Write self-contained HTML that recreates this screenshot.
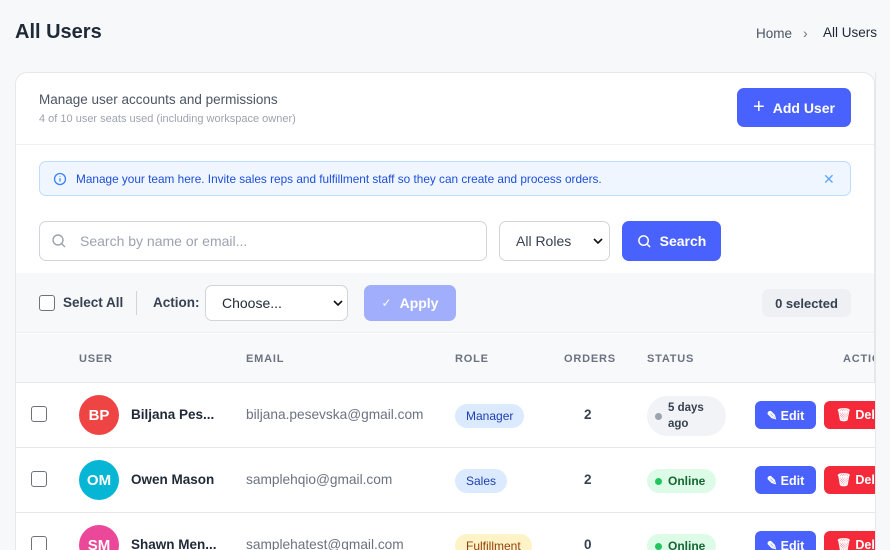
<!DOCTYPE html>
<html style="overflow:hidden;width:890px;height:550px"><head><meta charset="utf-8"><style>
*{box-sizing:border-box;margin:0;padding:0}
body{width:890px;height:550px;overflow:hidden;background:#f7f8fa;font-family:"Liberation Sans",sans-serif;position:relative;color:#1f2937}
.a{position:absolute}
.card{left:15px;top:72px;width:860px;height:478px;background:#fff;border:1px solid #e5e7eb;border-bottom:none;border-radius:12px 12px 0 0;overflow:hidden}
.btn{position:absolute;background:#4a62fd;color:#fff;border-radius:7px;font-weight:bold;display:flex;align-items:center;justify-content:center;gap:8px}
.cb{position:absolute;width:16px;height:16px;border:1.5px solid #6b7280;border-radius:3px;background:#fff}
.th{position:absolute;top:353px;font-size:11px;font-weight:bold;color:#6b7280;letter-spacing:.8px}
.row{position:absolute;left:16px;width:859px;height:65px;border-top:1px solid #e5e7eb;background:#fff;overflow:hidden}
.in{position:absolute;left:-16px;top:0;width:890px;height:65px}
.av{position:absolute;left:79px;top:12px;width:40px;height:40px;border-radius:50%;color:#fff;font-weight:bold;font-size:15px;display:flex;align-items:center;justify-content:center}
.nm{position:absolute;left:131px;top:24px;font-size:13.5px;font-weight:bold;color:#1f2937}
.em{position:absolute;left:246px;top:24px;font-size:13.7px;color:#6b7280}
.pill{position:absolute;left:455px;top:21px;height:24px;border-radius:12px;font-size:12px;padding:0 11px;display:flex;align-items:center}
.ord{position:absolute;left:584px;top:24px;font-size:13.5px;font-weight:bold;color:#374151}
.st{position:absolute;left:647px;top:21px;height:24px;border-radius:12px;font-size:12px;padding:0 11px 0 8px;display:flex;align-items:center;gap:6px;background:#dcfce7;color:#166534;font-weight:bold}
.dot{width:7px;height:7px;border-radius:50%;background:#22c55e}
.eb{position:absolute;left:755px;top:18px;width:61px;height:28px;background:#4a62fd;color:#fff;border-radius:6px;font-size:12.5px;font-weight:bold;display:flex;align-items:center;justify-content:center;gap:4px}
.db{position:absolute;left:824px;top:18px;width:80px;height:28px;background:#f42a3a;color:#fff;border-radius:6px;font-size:12.5px;font-weight:bold;display:flex;align-items:center;padding-left:12px;gap:5px}
</style></head><body>
<div class="a" style="left:15px;top:21px;font-size:20px;font-weight:bold;color:#1f2937">All Users</div>
<div class="a" style="left:756px;top:26px;font-size:13.5px;color:#4b5563">Home</div>
<div class="a" style="left:803px;top:25px;font-size:14px;color:#6b7280">›</div>
<div class="a" style="left:823px;top:25px;font-size:13.5px;color:#1f2937">All Users</div>

<div class="a card"></div>
<div class="a" style="left:39px;top:92px;font-size:13.5px;color:#4b5563">Manage user accounts and permissions</div>
<div class="a" style="left:39px;top:113px;font-size:11px;color:#9ca3af">4 of 10 user seats used (including workspace owner)</div>
<div class="btn" style="left:737px;top:88px;width:114px;height:39px;font-size:14px"><span style="font-size:20px;font-weight:normal">+</span>Add User</div>
<div class="a" style="left:16px;top:144px;width:858px;height:1px;background:#eef0f3"></div>

<div class="a" style="left:39px;top:161px;width:812px;height:35px;background:#eff6ff;border:1px solid #bfdbfe;border-radius:7px"></div>
<svg class="a" style="left:53px;top:172px" width="14" height="14" viewBox="0 0 14 14"><circle cx="7" cy="7" r="5.5" fill="none" stroke="#3b82f6" stroke-width="1.3"/><path d="M7 6.3v3.2M7 4.3v.4" stroke="#3b82f6" stroke-width="1.3"/></svg>
<div class="a" style="left:76px;top:172px;font-size:11.8px;color:#1d4ed8">Manage your team here. Invite sales reps and fulfillment staff so they can create and process orders.</div>
<div class="a" style="left:823px;top:171px;font-size:14px;color:#60a5fa">✕</div>

<div class="a" style="left:39px;top:221px;width:448px;height:40px;border:1px solid #d1d5db;border-radius:7px;background:#fff"></div>
<svg class="a" style="left:51px;top:233px" width="16" height="16" viewBox="0 0 16 16"><circle cx="7" cy="7" r="5" fill="none" stroke="#9ca3af" stroke-width="1.4"/><path d="M10.7 10.7l3.3 3.3" stroke="#9ca3af" stroke-width="1.4"/></svg>
<div class="a" style="left:80px;top:233px;font-size:14px;color:#9ca3af">Search by name or email...</div>
<div class="a" style="left:499px;top:221px;width:111px;height:40px;border:1px solid #d1d5db;border-radius:7px;background:#fff"></div>
<div class="a" style="left:516px;top:233px;font-size:14px;color:#374151">All Roles</div>
<svg class="a" style="left:593px;top:237px" width="10" height="8" viewBox="0 0 10 8"><path d="M1 2l4 4 4-4" fill="none" stroke="#111" stroke-width="1.6"/></svg>
<div class="btn" style="left:622px;top:221px;width:99px;height:40px;font-size:14px"><svg width="15" height="15" viewBox="0 0 16 16"><circle cx="7" cy="7" r="5" fill="none" stroke="#fff" stroke-width="1.6"/><path d="M10.7 10.7l3.3 3.3" stroke="#fff" stroke-width="1.6"/></svg>Search</div>

<div class="a" style="left:16px;top:273px;width:858px;height:60px;background:#f7f8fa;border-bottom:1px solid #eceef2"></div>
<div class="cb" style="left:39px;top:295px"></div>
<div class="a" style="left:63px;top:295px;font-size:13.5px;font-weight:bold;color:#374151">Select All</div>
<div class="a" style="left:136px;top:291px;width:1px;height:24px;background:#d1d5db"></div>
<div class="a" style="left:153px;top:295px;font-size:13.5px;font-weight:bold;color:#374151">Action:</div>
<div class="a" style="left:205px;top:285px;width:143px;height:36px;border:1px solid #d1d5db;border-radius:7px;background:#fff"></div>
<div class="a" style="left:222px;top:295px;font-size:14px;color:#1f2937">Choose...</div>
<svg class="a" style="left:333px;top:299px" width="10" height="8" viewBox="0 0 10 8"><path d="M1 2l4 4 4-4" fill="none" stroke="#111" stroke-width="1.6"/></svg>
<div class="btn" style="left:364px;top:285px;width:92px;height:36px;font-size:14px;background:#a0aefc"><span style="font-size:12px;font-weight:normal">✓</span>Apply</div>
<div class="a" style="left:762px;top:289px;width:89px;height:28px;background:#eef0f4;border-radius:7px;font-size:13px;font-weight:bold;color:#374151;display:flex;align-items:center;justify-content:center">0 selected</div>

<div class="a" style="left:16px;top:334px;width:858px;height:48px;background:#f8f9fb;overflow:hidden">
<div class="th" style="left:63px;top:19px">USER</div>
<div class="th" style="left:230px;top:19px">EMAIL</div>
<div class="th" style="left:439px;top:19px">ROLE</div>
<div class="th" style="left:548px;top:19px">ORDERS</div>
<div class="th" style="left:631px;top:19px">STATUS</div>
<div class="th" style="left:827px;top:19px">ACTIONS</div>
</div>

<div class="row" style="top:382px"><div class="in">
<div class="cb" style="left:31px;top:23px"></div>
<div class="av" style="background:#ef4444">BP</div>
<div class="nm">Biljana Pes...</div>
<div class="em">biljana.pesevska@gmail.com</div>
<div class="pill" style="background:#dbeafe;color:#1e40af">Manager</div>
<div class="ord">2</div>
<div class="st" style="background:#f1f3f6;color:#374151;top:13px;height:40px;border-radius:20px;padding-right:22px;font-size:11.5px;line-height:16px"><span class="dot" style="background:#9ca3af"></span><span>5 days<br>ago</span></div>
<div class="eb">✎ Edit</div>
<div class="db">🗑 Delete</div>
</div></div>
<div class="row" style="top:447px"><div class="in">
<div class="cb" style="left:31px;top:23px"></div>
<div class="av" style="background:#06b6d4">OM</div>
<div class="nm">Owen Mason</div>
<div class="em">samplehqio@gmail.com</div>
<div class="pill" style="background:#dbeafe;color:#1e40af">Sales</div>
<div class="ord">2</div>
<div class="st"><span class="dot"></span>Online</div>
<div class="eb">✎ Edit</div>
<div class="db">🗑 Delete</div>
</div></div>
<div class="row" style="top:512px;height:38px"><div class="in">
<div class="cb" style="left:31px;top:23px"></div>
<div class="av" style="background:#ec4899">SM</div>
<div class="nm">Shawn Men...</div>
<div class="em">samplehatest@gmail.com</div>
<div class="pill" style="background:#fef3c7;color:#92400e">Fulfillment</div>
<div class="ord">0</div>
<div class="st"><span class="dot"></span>Online</div>
<div class="eb">✎ Edit</div>
<div class="db">🗑 Delete</div>
</div></div>
<div class="a" style="left:875px;top:72px;width:15px;height:478px;background:#f7f8fa;border-left:1px solid #e5e7eb"></div>
</body></html>
